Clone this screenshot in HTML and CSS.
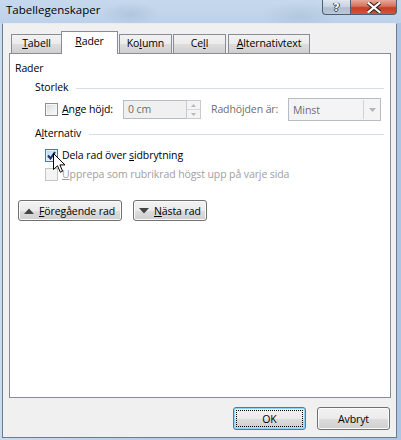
FILE: index.html
```html
<!DOCTYPE html>
<html lang="sv">
<head>
  <meta charset="UTF-8">
  <title>Tabellegenskaper</title>
  <link rel="stylesheet" href="styles.css">
</head>
<body>
  <div class="window">
    <div class="titlebar">
      <span class="title">Tabellegenskaper</span>
      <div class="caption-buttons">
        <div class="cap-btn help">?</div>
        <div class="cap-btn close">
          <svg width="14" height="11" viewBox="0 0 14 11">
            <path d="M1.5 1 L12.5 10 M12.5 1 L1.5 10" stroke="#3b2320" stroke-width="4.2" stroke-linecap="square"/>
            <path d="M1.5 1 L12.5 10 M12.5 1 L1.5 10" stroke="#ffffff" stroke-width="2.2" stroke-linecap="square"/>
          </svg>
        </div>
      </div>
    </div>

    <div class="client">
      <div class="tabs">
        <div class="tab tab-tabell"><u>T</u>abell</div>
        <div class="tab active tab-rader"><u>R</u>ader</div>
        <div class="tab tab-kolumn">Ko<u>l</u>umn</div>
        <div class="tab tab-cell">Ce<u>l</u>l</div>
        <div class="tab tab-alt"><u>A</u>lternativtext</div>
      </div>

      <div class="panel">
        <div class="section-title">Rader</div>

        <div class="group-head">
          <span>Storlek</span>
          <div class="group-line"></div>
        </div>
        <div class="size-row">
          <span class="checkbox"></span>
          <span class="label label-height"><u>A</u>nge höjd:</span>
          <div class="spin-input">
            <div class="text-input">0 cm</div>
            <div class="spinner">
              <div class="spin-btn"><svg width="5" height="3" viewBox="0 0 5 3"><path d="M0 3 L2.5 0 L5 3 Z" fill="#b9b9b9"/></svg></div>
              <div class="spin-btn"><svg width="5" height="3" viewBox="0 0 5 3"><path d="M0 0 L2.5 3 L5 0 Z" fill="#b9b9b9"/></svg></div>
            </div>
          </div>
          <span class="label label-dim label-rowheight">Radhöjden är:</span>
          <div class="select">
            <span class="select-value">Minst</span>
            <div class="select-arrow"><svg width="7" height="4" viewBox="0 0 7 4"><path d="M0 0 L3.5 4 L7 0 Z" fill="#b5b5b5"/></svg></div>
          </div>
        </div>

        <div class="group-head">
          <span>A<u>l</u>ternativ</span>
          <div class="group-line"></div>
        </div>
        <div class="option-row option-first">
          <span class="checkbox checked">
            <svg width="9" height="9" viewBox="0 0 9 9"><path d="M1 4.5 L3.5 7.5 L8 1" fill="none" stroke="#1f2f63" stroke-width="2"/></svg>
          </span>
          <span class="label">Dela rad över <u>s</u>idbrytning</span>
        </div>
        <div class="option-row">
          <span class="checkbox disabled"></span>
          <span class="label label-disabled"><u>U</u>pprepa som rubrikrad högst upp på varje sida</span>
        </div>

        <div class="nav-row">
          <button class="btn nav-btn nav-prev">
            <svg width="10" height="6" viewBox="0 0 10 6"><path d="M0 6 L5 0.5 L10 6 Z" fill="#444"/></svg>
            <span><u>F</u>öregående rad</span>
          </button>
          <button class="btn nav-btn nav-next">
            <svg width="10" height="6" viewBox="0 0 10 6"><path d="M0 0 L5 5.5 L10 0 Z" fill="#444"/></svg>
            <span><u>N</u>ästa rad</span>
          </button>
        </div>
      </div>

      <div class="footer">
        <button class="btn btn-default">OK</button>
        <button class="btn">Avbryt</button>
      </div>
    </div>
  </div>

  <!-- mouse pointer over the first checkbox -->
  <svg class="cursor" width="13" height="21" viewBox="0 0 13 21">
    <path d="M0.5 0.5 L0.5 16.5 L4.5 12.8 L7.3 19.2 L9.6 18.2 L6.9 11.9 L12 11.9 Z" fill="#ffffff" stroke="#000000" stroke-width="1" stroke-linejoin="miter"/>
  </svg>
</body>
</html>
```

FILE: styles.css
```css
body {
  margin: 0;
  width: 401px;
  height: 440px;
  overflow: hidden;
  position: relative;
  font-family: "Open Sans", "Noto Sans", sans-serif;
  font-size: 10.5px;
  letter-spacing: -0.1px;
  color: #000;
  background: #b7cfe9;
}

.window {
  height: 440px;
  display: flex;
  flex-direction: column;
  background: linear-gradient(90deg, #c9dbee 0%, #b5cde8 40%, #aac6e4 100%);
}

/* title bar (aero glass) */
.titlebar {
  height: 23px;
  display: flex;
  align-items: flex-start;
  padding-left: 6px;
  background:
    radial-gradient(ellipse 30px 12px at 130px 14px, rgba(150, 170, 195, 0.35), transparent),
    radial-gradient(ellipse 40px 14px at 300px 16px, rgba(150, 170, 195, 0.3), transparent),
    linear-gradient(180deg, #c6d8ec 0%, #bdd2ea 100%);
}

.title {
  font-size: 11.5px;
  letter-spacing: 0;
  line-height: 20px;
  color: #000;
}

.caption-buttons {
  margin-left: auto;
  margin-right: 4px;
  display: flex;
  height: 15px;
}

.cap-btn {
  height: 14px;
  display: flex;
  align-items: center;
  justify-content: center;
  border: 1px solid #4f5f73;
  border-top: none;
}

.help {
  width: 27px;
  border-radius: 0 0 0 4px;
  border-right: none;
  background: linear-gradient(180deg, #dfe7f0 0%, #c5d2e0 50%, #aebdd0 55%, #b9c9da 100%);
  color: #fff;
  font-family: "DejaVu Sans", sans-serif;
  font-weight: bold;
  font-size: 11px;
  text-shadow: 0 0 1px #2b3848, 1px 0 0 #3d4a5a, -1px 0 0 #3d4a5a, 0 1px 0 #3d4a5a;
}

.close {
  width: 45px;
  border-radius: 0 0 4px 0;
  background: linear-gradient(180deg, #e7a99a 0%, #d6705a 45%, #c43f25 55%, #d4553a 100%);
}

/* dialog client area */
.client {
  flex: 1;
  margin: 0 4px 2px 2px;
  border: 1px solid #6d7b8c;
  border-top-color: #e4ecf5;
  background: #f0f0f0;
  padding: 0 5px 0 6px;
  display: flex;
  flex-direction: column;
}

.tabs {
  display: flex;
  align-items: flex-end;
  height: 29px;
  padding-left: 2px;
  position: relative;
  z-index: 1;
}

.tab {
  height: 18px;
  line-height: 17px;
  text-align: center;
  border: 1px solid #898c95;
  border-bottom: none;
  background: linear-gradient(180deg, #f2f2f2 0%, #ebebeb 50%, #dddddd 51%, #cfcfcf 100%);
}

.tab.active {
  height: 22px;
  line-height: 19px;
  background: #fff;
  margin-bottom: -1px;
}

.tab-tabell { width: 49px; border-right: none; }
.tab-rader { width: 55px; }
.tab-kolumn { width: 51px; margin-left: 1px; }
.tab-cell { width: 51px; margin-left: 1px; }
.tab-alt { width: 80px; margin-left: 2px; }

.panel {
  box-sizing: border-box;
  height: 345px;
  flex: none;
  background: #fff;
  border: 1px solid #898c95;
  padding: 7px 6px 0 5px;
}

.section-title {
  line-height: 15px;
}

.group-head {
  display: flex;
  align-items: center;
  margin: 4px 0 0 20px;
  line-height: 15px;
}

.group-line {
  flex: 1;
  height: 1px;
  background: #d5dfe5;
  margin: 1px 0 0 8px;
}

.size-row {
  display: flex;
  align-items: center;
  height: 21px;
  margin: 4px 0 6px 30px;
}

.checkbox {
  width: 11px;
  height: 11px;
  border: 1px solid #8e8f8f;
  background: linear-gradient(135deg, #d7d8da 0%, #f0f0f0 60%, #fafafa 100%);
  box-shadow: inset 0 0 0 1px #f6f6f6;
  display: flex;
  align-items: center;
  justify-content: center;
  flex: none;
}

.checkbox.checked {
  border-color: #3c7fb1;
  background: linear-gradient(135deg, #b1d8f0 0%, #d9eefb 60%, #e9f6fd 100%);
  box-shadow: inset 0 0 0 1px #def0fb;
}

.checkbox.disabled {
  border-color: #c5c5c5;
  background: #f4f4f4;
  box-shadow: none;
}

.label {
  margin-left: 4px;
  line-height: 15px;
  white-space: nowrap;
}

.label-height {
  width: 61px;
}

.label-dim {
  color: #6d6d6d;
}

.label-disabled {
  color: #a0a0a0;
}

.label-rowheight {
  margin-left: 10px;
  width: 77px;
}

.spin-input {
  display: flex;
  height: 19px;
}

.text-input {
  width: 58px;
  height: 17px;
  border: 1px solid #b7bcc2;
  border-right: none;
  background: #f0f0f0;
  color: #6d6d6d;
  line-height: 17px;
  padding-left: 4px;
}

.spinner {
  width: 13px;
  border: 1px solid #c7cbd0;
  display: flex;
  flex-direction: column;
}

.spin-btn {
  flex: 1;
  display: flex;
  align-items: center;
  justify-content: center;
  background: #f4f4f4;
}

.spin-btn + .spin-btn {
  border-top: 1px solid #d6d9dd;
}

.select {
  width: 91px;
  height: 21px;
  border: 1px solid #b7bcc2;
  background: #f4f4f4;
  display: flex;
  align-items: center;
}

.select-value {
  flex: 1;
  padding-left: 4px;
  color: #6d6d6d;
}

.select-arrow {
  width: 16px;
  height: 19px;
  border-left: 1px solid #cfd3d8;
  display: flex;
  align-items: center;
  justify-content: center;
}

.option-row {
  display: flex;
  align-items: center;
  height: 19px;
  margin-left: 30px;
}

.option-first {
  margin-top: 5px;
}

.nav-row {
  display: flex;
  gap: 11px;
  margin: 16px 0 0 3px;
}

.btn {
  height: 23px;
  padding: 0;
  font-family: inherit;
  font-size: 10.5px;
  letter-spacing: -0.1px;
  color: #000;
  border: 1px solid #707070;
  border-radius: 3px;
  background: linear-gradient(180deg, #f2f2f2 0%, #ebebeb 50%, #dddddd 51%, #cfcfcf 100%);
  box-shadow: inset 0 0 0 1px #fbfbfb;
  position: relative;
}

.nav-btn {
  height: 21px;
  display: flex;
  align-items: center;
  padding: 0 0 0 5px;
  gap: 5px;
  white-space: nowrap;
}

.nav-prev { width: 104px; }
.nav-next { width: 74px; }

.footer {
  display: flex;
  justify-content: flex-end;
  gap: 11px;
  margin-top: 9px;
  padding-right: 1px;
}

.footer .btn {
  width: 73px;
}

.btn-default {
  border-color: #3c7fb1;
  box-shadow: inset 0 0 0 1px #8fd3f5;
}

.btn-default::after {
  content: "";
  position: absolute;
  top: 2px;
  left: 2px;
  right: 2px;
  bottom: 2px;
  border: 1px dotted #000;
}

.cursor {
  position: absolute;
  left: 53px;
  top: 153px;
}
```
